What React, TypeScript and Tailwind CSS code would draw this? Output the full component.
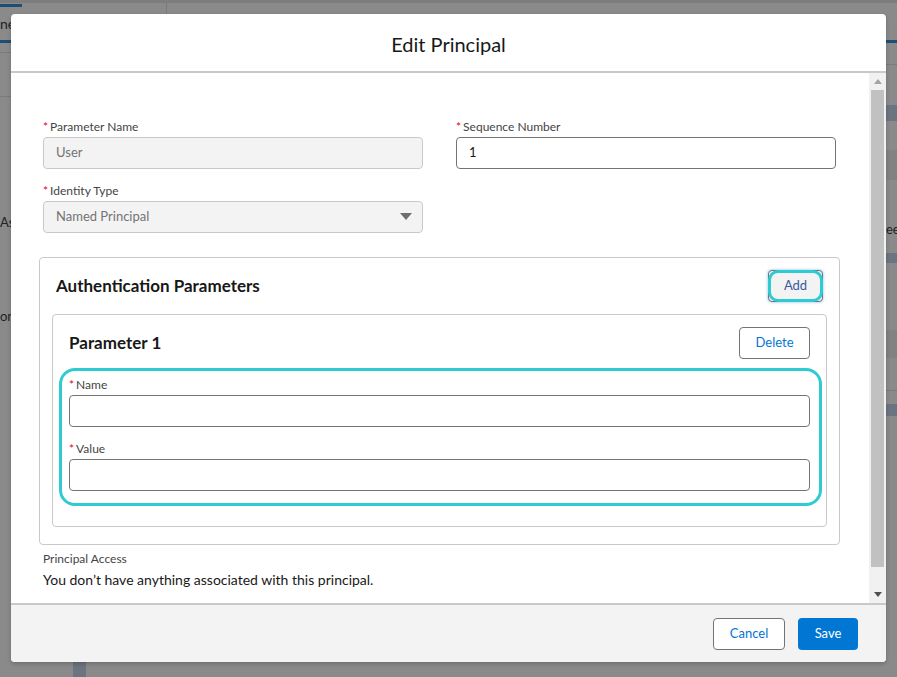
import React from "react";

const font = { fontFamily: "Lato, 'Liberation Sans', sans-serif" };

function Label({ text }: { text: string }) {
  return (
    <div className="text-[12px] leading-[18px] text-[#444444] mb-[1px] flex">
      <span className="text-[#ea001e] mr-[2px]">*</span>
      <span>{text}</span>
    </div>
  );
}

function Input({ value, disabled }: { value?: string; disabled?: boolean }) {
  return (
    <div
      className={
        "h-[32px] rounded-[4px] border flex items-center pl-[12px] text-[13px] " +
        (disabled
          ? "bg-[#f3f3f3] border-[#c9c9c9] text-[#747474]"
          : "bg-white border-[#747474] text-[#181818]")
      }
    >
      {value}
    </div>
  );
}

export default function App() {
  return (
    <div className="relative w-[897px] h-[677px] bg-[#8a8a8a] overflow-hidden" style={font}>
      {/* underlying page hints */}
      <div className="absolute left-0 top-0 w-full h-[3px] bg-[#7d7d7d]" />
      <div className="absolute left-0 top-[4px] w-[22px] h-[3px] bg-[#1f4e74]" />
      <div className="absolute left-0 top-[40px] w-[11px] h-[3px] bg-[#1f4e74]" />
      <div className="absolute left-0 top-[13px] text-[14px] text-[#222]">ne</div>
      <div className="absolute left-[166px] top-[3px] w-[1px] h-[11px] bg-[#7a7a7a]" />
      <div className="absolute left-0 top-[52px] w-[11px] h-[1px] bg-[#7a7a7a]" />
      <div className="absolute left-0 top-[96px] w-[11px] h-[1px] bg-[#7a7a7a]" />
      <div className="absolute left-0 top-[213px] text-[13px] text-[#222]">As</div>
      <div className="absolute left-0 top-[307px] text-[13px] text-[#222]">on</div>
      <div className="absolute left-[886px] top-[40px] w-[11px] h-[3px] bg-[#1f4e74]" />
      <div className="absolute left-[886px] top-[64px] w-[11px] h-[1px] bg-[#7a7a7a]" />
      <div className="absolute left-[886px] top-[105px] w-[11px] h-[16px] bg-[#6b7480]" />
      <div className="absolute left-[886px] top-[150px] w-[11px] h-[30px] bg-[#828282]" />
      <div className="absolute left-[886px] top-[220px] w-[11px] overflow-hidden text-[13px] text-[#222]">ee</div>
      <div className="absolute left-[886px] top-[253px] w-[11px] h-[10px] bg-[#6b7480]" />
      <div className="absolute left-[886px] top-[330px] w-[11px] h-[28px] bg-[#828282]" />
      <div className="absolute left-[886px] top-[390px] w-[11px] h-[1px] bg-[#7a7a7a]" />
      <div className="absolute left-[886px] top-[404px] w-[11px] h-[12px] bg-[#6b7480]" />
      <div className="absolute left-[73px] top-[662px] w-[13px] h-[15px] bg-[#6b7480]" />

      <div className="relative pt-[14px] pl-[11px]">
        <div className="w-[875px] h-[648px] bg-white rounded-[4px] shadow-[0_2px_4px_rgba(0,0,0,0.2)] flex flex-col overflow-hidden">
          {/* header */}
          <div className="h-[59px] shrink-0 border-b-2 border-[#c9c9c9] flex items-center justify-center">
            <div className="text-[20px] text-[#181818] leading-[26px] mt-[3px]">Edit Principal</div>
          </div>

          {/* body */}
          <div className="h-[530px] flex shrink-0">
            <div className="flex-1 pl-[28px] pr-[29px] pt-[45px]">
              <div className="px-[4px] grid grid-cols-2 gap-x-[33px]">
                <div>
                  <Label text="Parameter Name" />
                  <Input value="User" disabled />
                </div>
                <div>
                  <Label text="Sequence Number" />
                  <Input value="1" />
                </div>
                <div className="mt-[13px]">
                  <Label text="Identity Type" />
                  <div className="h-[32px] rounded-[4px] border border-[#c9c9c9] bg-[#f3f3f3] flex items-center justify-between pl-[12px] pr-[10px] text-[13px] text-[#747474]">
                    <span>Named Principal</span>
                    <svg width="12" height="8" viewBox="0 0 12 8">
                      <path d="M0 0 L12 0 L6 7 Z" fill="#706e6b" />
                    </svg>
                  </div>
                </div>
              </div>

              {/* auth card */}
              <div className="mt-[24px] border border-[#c9c9c9] rounded-[4px] px-[12px] pt-[12px] pb-[17px]">
                <div className="flex items-center justify-between pl-[4px] pr-[4px]">
                  <div className="text-[17px] font-bold text-[#181818]">Authentication Parameters</div>
                  <div className="relative w-[55px] h-[32px] rounded-[4px] border border-[#747474] bg-[#f3f3f3] shadow-[0_0_3px_rgba(1,118,211,0.5)]">
                    <div className="absolute inset-[-1px] rounded-[10px] border-[3px] border-[#2ecbd3] bg-[#f3f3f3]" />
                    <div className="relative h-full flex items-center justify-center text-[13px] text-[#3a5a9c]">
                      Add
                    </div>
                  </div>
                </div>

                <div className="mt-[12px] border border-[#c9c9c9] rounded-[4px] pl-[16px] pr-[16px] pt-[12px] pb-[35px]">
                  <div className="flex items-center justify-between">
                    <div className="text-[17px] font-bold text-[#181818]">Parameter 1</div>
                    <div className="w-[71px] h-[32px] rounded-[4px] border border-[#747474] bg-white flex items-center justify-center text-[13px] text-[#0176d3]">
                      Delete
                    </div>
                  </div>
                  <div className="relative mt-[17px]">
                    <Label text="Name" />
                    <Input />
                    <div className="mt-[13px]">
                      <Label text="Value" />
                      <Input />
                    </div>
                    <div className="absolute left-[-10px] right-[-12px] top-[-8px] bottom-[-15px] rounded-[16px] border-[3px] border-[#2ecbd3]" />
                  </div>
                </div>
              </div>

              <div className="px-[4px] mt-[5px]">
                <div className="text-[12px] leading-[18px] text-[#444444]">Principal Access</div>
                <div className="text-[14px] leading-[20px] text-[#181818] mt-[2px]">
                  You don’t have anything associated with this principal.
                </div>
              </div>
            </div>

            {/* scrollbar */}
            <div className="w-[17px] bg-[#f1f1f1] flex flex-col items-center">
              <div className="h-[17px] w-full flex items-center justify-center">
                <svg width="8" height="5" viewBox="0 0 8 5">
                  <path d="M0 5 L8 5 L4 0 Z" fill="#a3a3a3" />
                </svg>
              </div>
              <div className="w-[13px] h-[477px] bg-[#c1c1c1]" />
              <div className="flex-1 w-full flex items-end justify-center pb-[6px]">
                <svg width="8" height="5" viewBox="0 0 8 5">
                  <path d="M0 0 L8 0 L4 5 Z" fill="#505050" />
                </svg>
              </div>
            </div>
          </div>

          {/* footer */}
          <div className="flex-1 border-t-2 border-[#c9c9c9] bg-[#f3f3f3] flex items-center justify-end pr-[28px] gap-[13px]">
            <div className="w-[72px] h-[32px] rounded-[4px] border border-[#747474] bg-white flex items-center justify-center text-[13px] text-[#0176d3]">
              Cancel
            </div>
            <div className="w-[60px] h-[32px] rounded-[4px] bg-[#0176d3] flex items-center justify-center text-[13px] text-white">
              Save
            </div>
          </div>
        </div>
      </div>
    </div>
  );
}
